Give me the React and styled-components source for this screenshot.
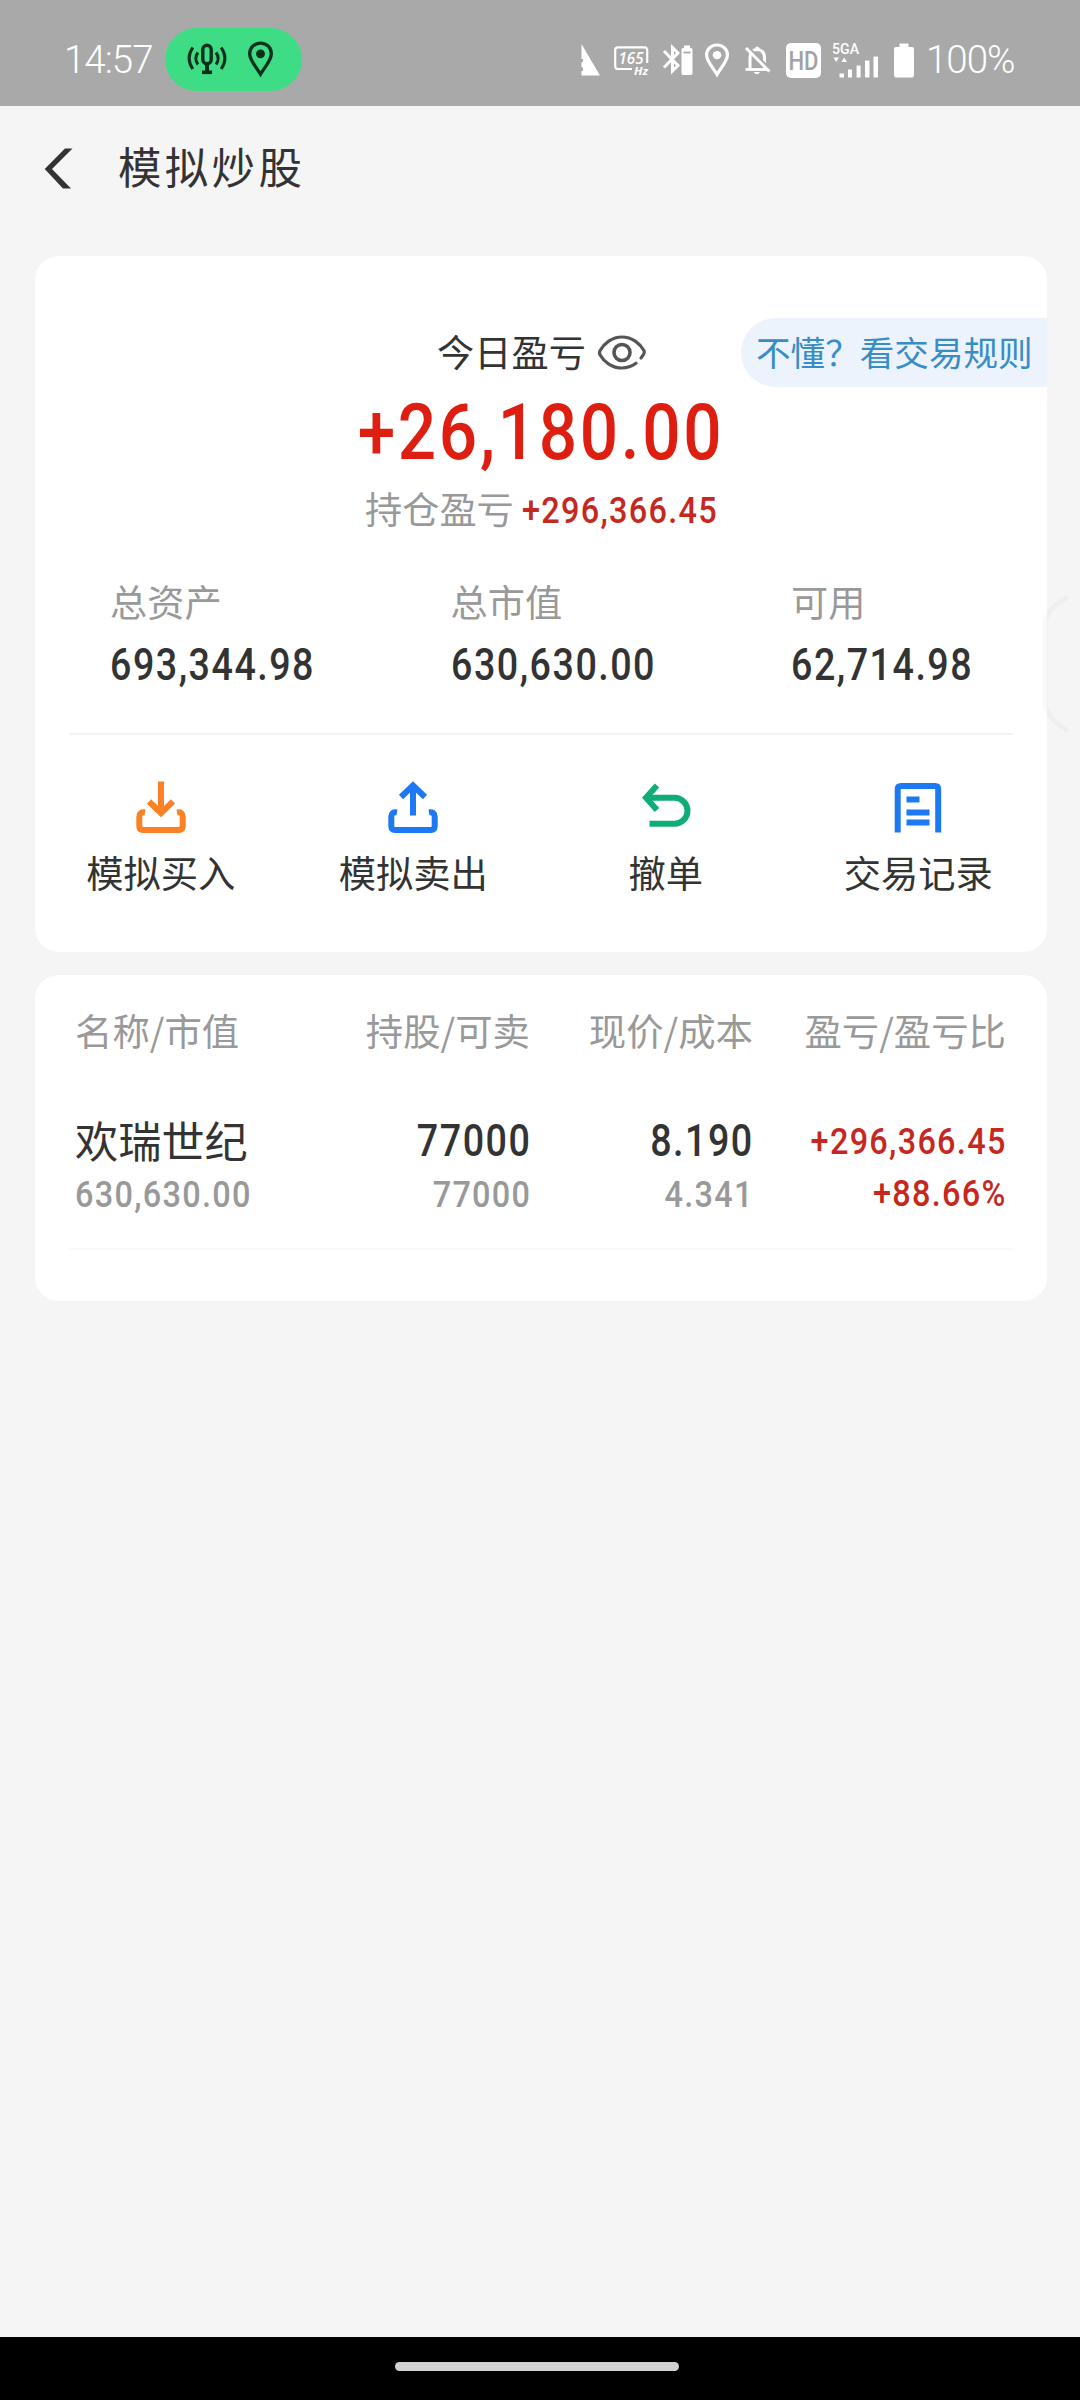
import React from 'react';
import styled, { createGlobalStyle } from 'styled-components';

const GlobalStyle = createGlobalStyle`
  * {
    box-sizing: border-box;
  }

  body {
    margin: 0;
    background: #f5f5f5;
    font-family: "Noto Sans CJK SC", sans-serif;
    color: #333333;
  }

  svg {
    display: block;
    flex: none;
    overflow: visible;
  }
`;

const Screen = styled.div`
  display: flex;
  flex-direction: column;
  position: relative;
  width: 1080px;
  height: 2400px;
  overflow: hidden;
  background: #f5f5f5;
`;

const StatusBar = styled.header`
  display: flex;
  align-items: center;
  height: 106px;
  padding: 14px 64px 0 64px;
  background: #a9a9a9;
  color: #ffffff;
`;

const StatusText = styled.span`
  width: ${props => props.$width}px;
  font-family: Roboto, sans-serif;
  font-weight: 350;
  font-size: 38.5px;
  line-height: 40px;
  letter-spacing: -1px;
  white-space: nowrap;
`;

const PrivacyPill = styled.div`
  display: flex;
  align-items: center;
  gap: 21px;
  width: 137px;
  height: 63px;
  margin-bottom: 2px;
  padding-left: 22px;
  border-radius: 32px;
  background: #3fdc86;
`;

const StatusIcons = styled.div`
  display: flex;
  align-items: center;
  margin-left: auto;
`;

const StatusIcon = styled.svg`
  margin-right: ${props => props.$gap}px;
`;

const TitleBar = styled.div`
  display: flex;
  align-items: center;
  height: 150px;
  padding: 0 0 24px 44px;
`;

const Title = styled.h1`
  margin: 0 0 7px 44px;
  font-weight: 400;
  font-size: 43.5px;
  line-height: 60px;
  letter-spacing: 3.3px;
`;

const Card = styled.section`
  width: 1012px;
  height: ${props => props.$height}px;
  margin: 0 0 23px 35px;
  padding-top: ${props => props.$top}px;
  border-radius: 24px;
  background: #ffffff;
`;

const TodayRow = styled.div`
  display: grid;
  grid-template-columns: 1fr auto 1fr;
  align-items: center;
  height: 69px;
`;

const TodayLabel = styled.div`
  display: flex;
  align-items: center;
  gap: 12px;
  grid-column: 2;
  padding-left: 1px;
  font-size: 37.2px;
  line-height: 50px;
`;

const LabelText = styled.span`
  padding-bottom: 4px;
`;

const RulesLink = styled.a`
  justify-self: end;
  width: 306px;
  height: 69px;
  padding-left: 15px;
  border-radius: 35px 0 0 35px;
  background: #ecf3fc;
  color: #388dc6;
  font-size: 34.6px;
  line-height: 66px;
  white-space: nowrap;
`;

// Roboto squeezed to the narrow figures of the quote font
const Num = styled.span`
  display: block;
  margin-right: ${props => props.$align === 'right' ? -1 : 0}px;
  font-family: Roboto, sans-serif;
  font-weight: 500;
  font-size: ${props => props.$size}px;
  line-height: ${props => props.$line || 53}px;
  letter-spacing: 0.04em;
  text-align: ${props => props.$align || 'left'};
  color: ${props => props.$color || '#333333'};
  white-space: nowrap;
  transform: scaleX(0.865);
  transform-origin: ${props => props.$align || 'left'} center;
`;

const HoldingRow = styled.div`
  display: flex;
  align-items: center;
  height: 62px;
  padding-left: 330px;
  gap: 8px;
  font-size: 37.2px;
  line-height: 50px;
  color: #999999;
`;

const Stats = styled.div`
  display: grid;
  grid-template-columns: repeat(3, 340.5px);
  height: 160px;
  padding: 34px 0 0 75px;
`;

const StatLabel = styled.div`
  font-size: 37.2px;
  line-height: 52px;
  color: #999999;
`;

const Divider = styled.hr`
  width: 944px;
  height: 2px;
  margin: ${props => props.$top}px 0 0 34px;
  border: 0;
  background: ${props => props.$color};
`;

const Actions = styled.nav`
  display: grid;
  grid-template-columns: repeat(4, 252.5px);
  padding-top: 46px;
`;

const Action = styled.div`
  display: flex;
  flex-direction: column;
  align-items: center;
  gap: 14px;
  padding-right: 1px;
  font-size: 37.3px;
  line-height: 50px;
`;

const TableRow = styled.div`
  display: grid;
  grid-template-columns: 455px 223px 253px;
  padding-left: 40px;
`;

const HeadRow = styled(TableRow)`
  margin-bottom: 60px;
  font-size: 37.4px;
  line-height: 50px;
  color: #999999;
`;

const Cell = styled.div`
  grid-row: 1;
  grid-column: ${props => props.$col};
  justify-self: ${props => props.$left ? 'start' : 'end'};
`;

const StockName = styled.div`
  height: 53px;
  font-size: 43.2px;
  line-height: 49px;
`;

const EdgeHandle = styled.svg`
  position: absolute;
  top: 590px;
  right: 0;
`;

const NavBar = styled.footer`
  display: flex;
  justify-content: center;
  height: 63px;
  margin-top: auto;
  padding: 25px 6px 0 0;
  background: #000000;
`;

const HomeIndicator = styled.div`
  width: 284px;
  height: 9px;
  border-radius: 5px;
  background: #d2d2d2;
`;

const MicIcon = () => (
  <svg width="40" height="32" viewBox="0 0 40 32" fill="none" stroke="#08301b" strokeWidth="3.4">
    <rect x="15.8" y="2.2" width="8.4" height="18.5" rx="4.2" />
    <path d="M20 22v7" strokeWidth="4" />
    <path d="M15 29.3h10" strokeWidth="3.6" />
    <path d="M11 9.5q-4.4 6 0 12M5.8 4.5q-7.4 11 0 21.5M29 9.5q4.4 6 0 12M34.2 4.5q7.4 11 0 21.5" strokeWidth="3" />
  </svg>
);

const PinIcon = ({ color, width, height, gap }) => (
  <StatusIcon $gap={gap} width={width} height={height} viewBox="0 0 24 35" preserveAspectRatio="none" fill="none">
    <path d="M12 2C6 2 1.6 6.5 1.6 12.3C1.6 18.5 7 24 12 32.3C17 24 22.4 18.5 22.4 12.3C22.4 6.5 18 2 12 2Z" stroke={color} strokeWidth="3.2" />
    <circle cx="12" cy="12.5" r="4.3" fill={color} />
  </StatusIcon>
);

const SystemIcons = () => (
  <StatusIcons>
    <StatusIcon $gap={14} width="19" height="34" viewBox="0 0 19 34">
      <path d="M0.5 1L19 32.5H0.5V28H2V24.5H0.5V19H2V16H0.5Z" fill="#fff" />
    </StatusIcon>
    <StatusIcon $gap={14} width="35" height="34" viewBox="0 0 35 34" fill="none">
      <path d="M18 26H4Q1.2 26 1.2 23.5V7Q1.2 4.3 4 4.3H30.5Q33.2 4.3 33.2 7V20" stroke="#fff" strokeWidth="2.2" />
      <text x="4.5" y="21" fill="#fff" fontFamily="Open Sans" fontSize="16.5" fontWeight="600" fontStyle="italic" textLength="25" lengthAdjust="spacingAndGlyphs">165</text>
      <text x="20" y="32" fill="#fff" fontFamily="Open Sans" fontSize="11" fontWeight="700" fontStyle="italic" textLength="14" lengthAdjust="spacingAndGlyphs">Hz</text>
    </StatusIcon>
    <StatusIcon $gap={12} width="30" height="34" viewBox="0 0 30 34" fill="none">
      <path d="M1 8L15 22.5L9.5 28V4.5L15 10L1 24.5" stroke="#fff" strokeWidth="3" />
      <path d="M18.5 6.5Q18.5 5 20 5H21V2.5H27V5H28Q29.5 5 29.5 6.5V30Q29.5 32 28 32H20Q18.5 32 18.5 30Z" fill="#fff" />
      <path d="M20.5 9.5h7" stroke="#a9a9a9" strokeWidth="1.8" />
    </StatusIcon>
    <PinIcon color="#fff" width={24} height={34} gap={16} />
    <StatusIcon $gap={16} width="25" height="34" viewBox="0 0 25 34" fill="none">
      <path d="M5 26V15Q5 7 12 6.5Q19.5 7 19.5 15V26" stroke="#fff" strokeWidth="3" />
      <path d="M0.5 26.5H22" stroke="#fff" strokeWidth="2.8" />
      <path d="M10 6.5V5Q12 2 14.5 5V6.5ZM8.5 29H15Q12 33.5 8.5 29Z" fill="#fff" />
      <path d="M3 4L25 26" stroke="#a9a9a9" strokeWidth="2.5" />
      <path d="M1 5L24.5 28.5" stroke="#fff" strokeWidth="3" />
    </StatusIcon>
    <StatusIcon $gap={11} width="35" height="35" viewBox="0 0 35 35">
      <rect width="35" height="35" rx="5" fill="#fff" />
      <text x="2.5" y="26.5" fill="#a2a2a2" fontFamily="Roboto" fontSize="25" fontWeight="500" textLength="30" lengthAdjust="spacingAndGlyphs">HD</text>
    </StatusIcon>
    <StatusIcon $gap={16} width="46" height="36" viewBox="0 0 46 36" fill="#fff">
      <text x="0" y="11.5" fontFamily="Roboto" fontSize="15.5" fontWeight="500" textLength="27" lengthAdjust="spacingAndGlyphs">5GA</text>
      <path d="M1.5 15.5H7L4.2 20ZM9.5 20H15L12.2 15.5Z" />
      <path d="M7.5 31.5h4.5v4h-4.5ZM16 27.5h4v8h-4ZM24.6 23.5h4v12h-4ZM33 18.5h4.5v17h-4.5ZM41.5 14.5h4.5v21h-4.5Z" />
    </StatusIcon>
    <StatusIcon $gap={12} width="20" height="35" viewBox="0 0 20 35">
      <path d="M0 6Q0 4 2 4H5.5V0.5H14.5V4H18Q20 4 20 6V32Q20 34.5 18 34.5H2Q0 34.5 0 32Z" fill="#fff" />
    </StatusIcon>
    <StatusText $width={90}>100%</StatusText>
  </StatusIcons>
);

const BackIcon = () => (
  <svg width="30" height="42" viewBox="0 0 30 42">
    <path d="M21 0.5H28.5L8 21L27 40.5H19L0.7 21Z" fill="#333" />
  </svg>
);

const EyeIcon = () => (
  <svg width="48" height="36" viewBox="0 0 48 36" fill="none" stroke="#555" strokeWidth="3.2">
    <circle cx="24" cy="17.5" r="8" strokeWidth="3.6" />
    <path d="M38 28.3Q31.5 33 24 33C14 33 6 27 1.8 19.5Q1.2 17.5 1.8 16C6 8.5 14 2 24 2C34 2 42 8.5 46.2 16Q47 18 43 23" strokeLinecap="round" />
  </svg>
);

const BuyIcon = () => (
  <svg width="50" height="52" viewBox="0 0 50 52" fill="none" stroke="#fb8122" strokeWidth="6">
    <path d="M25 0.5V32M13 20.5L25 32L37 20.5" />
    <path d="M9 31.5Q3.3 30.5 3.3 36V45Q3.3 49 7 49H43Q46.7 49 46.7 45V36Q46.7 30.5 41 31.5" />
  </svg>
);

const SellIcon = () => (
  <svg width="50" height="52" viewBox="0 0 50 52" fill="none" stroke="#1d78f4" strokeWidth="6">
    <path d="M25 34.5V4M13 16L25 4.5L37 16" />
    <path d="M9 31.5Q3.3 30.5 3.3 36V45Q3.3 49 7 49H43Q46.7 49 46.7 45V36Q46.7 30.5 41 31.5" />
  </svg>
);

const CancelIcon = () => (
  <svg width="50" height="52" viewBox="0 0 50 52" fill="none" stroke="#0fad77" strokeWidth="6">
    <path d="M16 4.5L5 16.7L16 29" />
    <path d="M5 16.7H33.5A13 13 0 0 1 33.5 42.7H8.5" />
  </svg>
);

const RecordIcon = () => (
  <svg width="50" height="52" viewBox="0 0 50 52" fill="none" stroke="#1d78f4" strokeWidth="6">
    <path d="M4.7 51.5V8Q4.7 5 8 5H42Q45.2 5 45.2 8V51.5" />
    <path d="M13.5 18.5H26.5M13.5 31.5H36.5M13.5 41.5H36.5" />
  </svg>
);

const stats = [
  { label: '总资产', value: '693,344.98' },
  { label: '总市值', value: '630,630.00' },
  { label: '可用', value: '62,714.98' },
];

const actions = [
  { label: '模拟买入', Icon: BuyIcon },
  { label: '模拟卖出', Icon: SellIcon },
  { label: '撤单', Icon: CancelIcon },
  { label: '交易记录', Icon: RecordIcon },
];

const App = () => {
  return (
    <>
      <GlobalStyle />
      <Screen>
        <StatusBar>
          <StatusText $width={101}>14:57</StatusText>
          <PrivacyPill>
            <MicIcon />
            <PinIcon color="#08301b" width={25} height={36} gap={0} />
          </PrivacyPill>
          <SystemIcons />
        </StatusBar>

        <TitleBar>
          <BackIcon />
          <Title>模拟炒股</Title>
        </TitleBar>

        <Card $height={696} $top={62}>
          <TodayRow>
            <TodayLabel>
              <LabelText>今日盈亏</LabelText>
              <EyeIcon />
            </TodayLabel>
            <RulesLink>不懂？看交易规则</RulesLink>
          </TodayRow>
          <Num $size={78} $line={92} $align="center" $color="#df1e12">+26,180.00</Num>
          <HoldingRow>
            <LabelText>持仓盈亏</LabelText>
            <Num $size={37.5} $color="#c5281f">+296,366.45</Num>
          </HoldingRow>
          <Stats>
            {stats.map(({ label, value }) => (
              <div key={label}>
                <StatLabel>{label}</StatLabel>
                <Num $size={43.5} $line={78}>{value}</Num>
              </div>
            ))}
          </Stats>
          <Divider $top={32} $color="#f4f4f4" />
          <Actions>
            {actions.map(({ label, Icon }) => (
              <Action key={label}>
                <Icon />
                {label}
              </Action>
            ))}
          </Actions>
        </Card>

        <Card $height={326} $top={30}>
          <HeadRow>
            <Cell $col={1} $left>名称/市值</Cell>
            <Cell $col={1}>持股/可卖</Cell>
            <Cell $col={2}>现价/成本</Cell>
            <Cell $col={3}>盈亏/盈亏比</Cell>
          </HeadRow>
          <TableRow>
            <Cell $col={1} $left>
              <StockName>欢瑞世纪</StockName>
              <Num $size={37.5} $color="#999999">630,630.00</Num>
            </Cell>
            <Cell $col={1}>
              <Num $size={43.5} $align="right">77000</Num>
              <Num $size={37.5} $align="right" $color="#999999">77000</Num>
            </Cell>
            <Cell $col={2}>
              <Num $size={43.5} $align="right">8.190</Num>
              <Num $size={37.5} $align="right" $color="#999999">4.341</Num>
            </Cell>
            <Cell $col={3}>
              <Num $size={37.5} $align="right" $color="#c5281f">+296,366.45</Num>
              <Num $size={37.5} $line={51} $align="right" $color="#c5281f">+88.66%</Num>
            </Cell>
          </TableRow>
          <Divider $top={27} $color="#f9f9f9" />
        </Card>

        <EdgeHandle width="40" height="150" viewBox="0 0 40 150" fill="none">
          <path d="M26 8C12 16 5 24 5 36V110C5 122 12 131 26 140" stroke="rgba(0, 0, 0, 0.022)" strokeWidth="5" strokeLinecap="round" />
        </EdgeHandle>

        <NavBar>
          <HomeIndicator />
        </NavBar>
      </Screen>
    </>
  );
};

export default App;
